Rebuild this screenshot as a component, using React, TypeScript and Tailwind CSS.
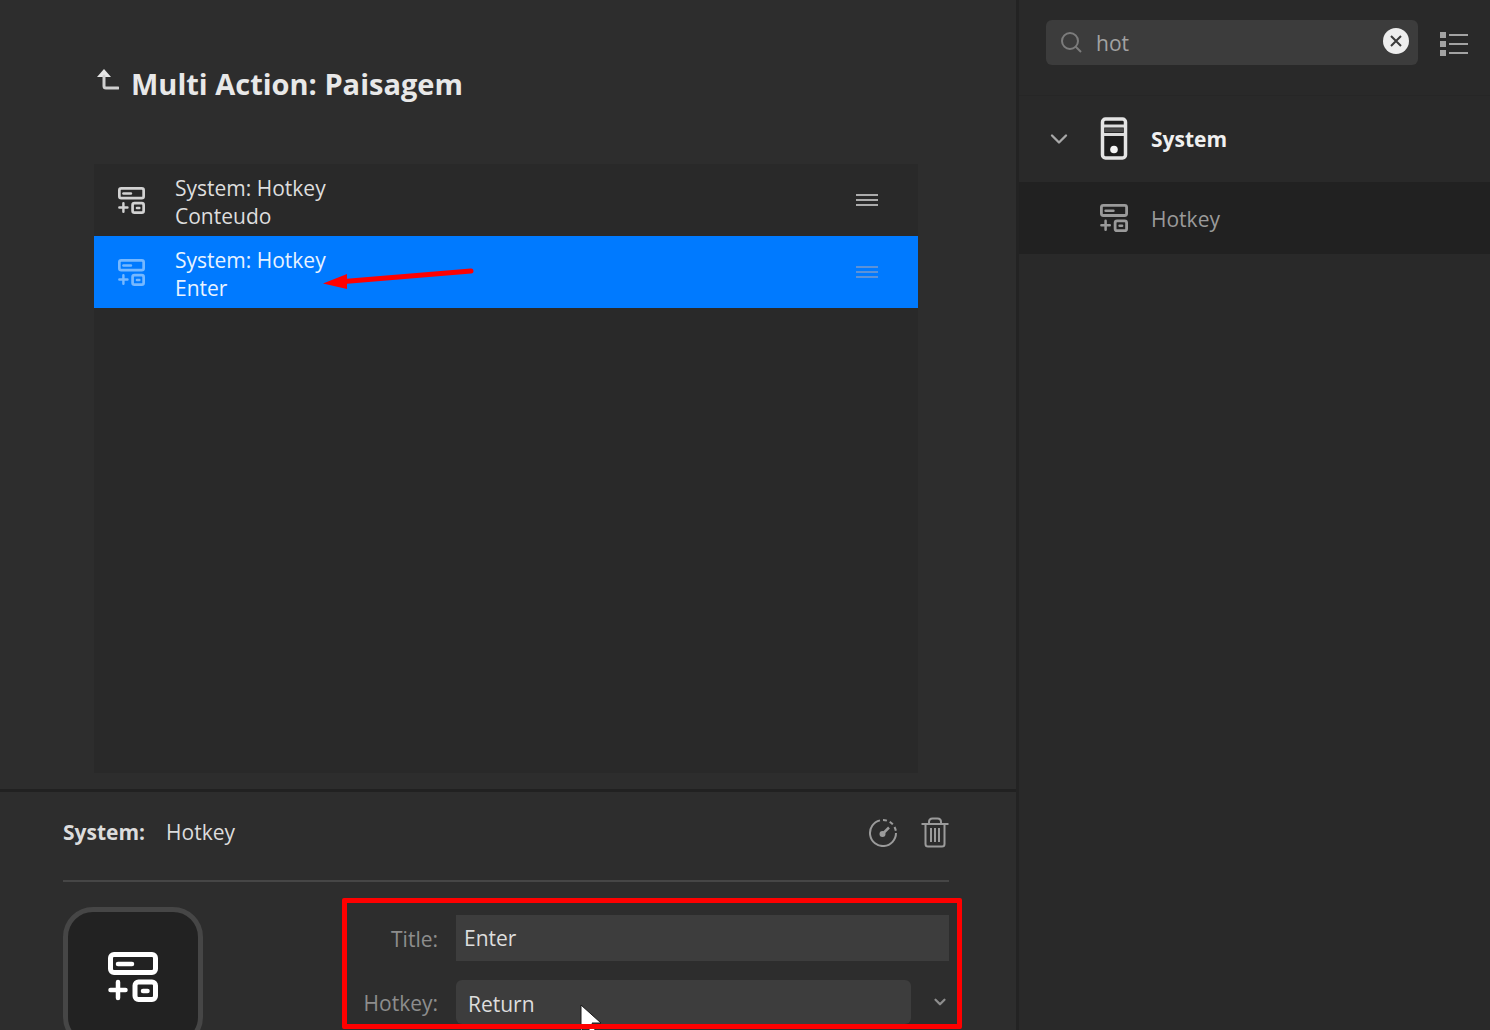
import React from 'react';
import { ChevronDown } from 'lucide-react';

interface ActionItem {
  id: number;
  name: string;
  title: string;
  selected: boolean;
}

const actions: ActionItem[] = [
  { id: 1, name: 'System: Hotkey', title: 'Conteudo', selected: false },
  { id: 2, name: 'System: Hotkey', title: 'Enter', selected: true },
];

const HotkeyIcon = ({ className }: { className?: string }) => (
  <svg viewBox="0 0 50 50" fill="none" stroke="currentColor" strokeWidth={5} className={className}>
    <rect x="2.5" y="2.5" width="45" height="18" rx="3.5" />
    <path d="M10 12h14" strokeWidth={4.5} strokeLinecap="round" />
    <path d="M10 30v16M2.5 38h15" strokeWidth={4.5} strokeLinecap="round" />
    <rect x="27" y="30" width="20.5" height="17.5" rx="3.5" />
    <path d="M35 39h4.5" strokeWidth={4.5} strokeLinecap="round" />
  </svg>
);

const BackIcon = () => (
  <svg viewBox="0 0 22 22" className="h-[22px] w-[22px]">
    <path d="M7 0L14 8H0Z" fill="#e6e6e6" />
    <path d="M7 7v10q0 2 2 2h12" fill="none" stroke="#d0d0d0" strokeWidth={3} strokeLinecap="round" />
  </svg>
);

const HandleIcon = ({ className }: { className?: string }) => (
  <svg viewBox="0 0 22 14" stroke="currentColor" strokeWidth={2} className={className}>
    <path d="M0 2h22M0 7h22M0 12h22" />
  </svg>
);

const SearchIcon = () => (
  <svg viewBox="0 0 22 22" fill="none" stroke="#7c7c7c" strokeWidth={2} className="h-[22px] w-[22px]">
    <circle cx="10" cy="9" r="8" />
    <path d="M15.5 14.5l5.5 5.5" />
  </svg>
);

const TowerIcon = () => (
  <svg viewBox="0 0 28 44" className="h-11 w-7">
    <rect x="2.5" y="2" width="23" height="39" rx="3" fill="#1d1d1d" stroke="#e4e4e4" strokeWidth={3.5} />
    <path d="M4 9h20M4 17.5h20" stroke="#dcdcdc" strokeWidth={3} />
    <path d="M4 13.2h20" stroke="#4a4a4a" strokeWidth={4} />
    <circle cx="14" cy="32.5" r="3.8" fill="#f4f4f4" />
  </svg>
);

const TimerIcon = () => (
  <svg viewBox="0 0 28 28" fill="none" stroke="#9b9b9b" strokeWidth={2} className="h-7 w-7">
    <path d="M11 1.4A13 13 0 1 0 27 14" />
    <path d="M14 1a13 13 0 0 1 13 13" strokeDasharray="4 3" />
    <path d="M14 14.5l6-6" strokeWidth={2.5} />
    <circle cx="13.5" cy="15" r="3" fill="#9b9b9b" stroke="none" />
  </svg>
);

const TrashIcon = () => (
  <svg viewBox="0 0 28 32" fill="none" stroke="#9b9b9b" strokeWidth={2} className="h-8 w-7">
    <path d="M0.5 7h27" />
    <path d="M8 7V5q0-3.5 3.5-3.5h5q3.5 0 3.5 3.5v2" />
    <path d="M4.5 7v20q0 2.5 2.5 2.5h14q2.5 0 2.5-2.5V7" />
    <path d="M10 11v14M14 11v14M18 11v14" />
  </svg>
);

const ListIcon = () => (
  <svg viewBox="0 0 30 26" className="h-[26px] w-[30px]">
    <path d="M1 1h6v6H1zM1 10h6v6H1zM1 19h6v6H1z" fill="#a3a3a3" />
    <path d="M10 4h19M10 13h19M10 22h19" stroke="#a3a3a3" strokeWidth={2} />
  </svg>
);

const ActionRow: React.FC<{ item: ActionItem }> = ({ item }) => (
  <li
    className={`flex h-[72px] items-center pr-10 pl-6 ${
      item.selected ? 'bg-[#007aff] text-[#e8f3ff]' : 'text-[#dedede]'
    }`}
  >
    <HotkeyIcon className={`h-[27px] w-[27px] ${item.selected ? 'text-[#76b8ff]' : 'text-[#d2d2d2]'}`} />
    <div className="ml-[30px] flex-1 pt-1 text-[21px] leading-7">
      <p>{item.name}</p>
      <p>{item.title}</p>
    </div>
    <button type="button" aria-label="Reorder">
      <HandleIcon className={`h-[14px] w-[22px] ${item.selected ? 'text-[#5c92d8]' : 'text-[#ababab]'}`} />
    </button>
  </li>
);

const ActionEditor = () => (
  <section className="relative h-[241px] shrink-0 overflow-hidden border-t-3 border-[#212121] pr-[67px] pl-[63px]">
    <div className="flex h-[90px] items-center border-b-2 border-[#464646] pb-[6px] text-[21px] text-[#dcdcdc]">
      <h2 className="font-bold">System:</h2>
      <span className="ml-[21px] flex-1">Hotkey</span>
      <button type="button" aria-label="Delay">
        <TimerIcon />
      </button>
      <button type="button" aria-label="Delete" className="ml-6">
        <TrashIcon />
      </button>
    </div>

    <div className="flex items-start pt-[25px]">
      <div className="flex h-[140px] w-[140px] shrink-0 items-center justify-center rounded-[30px] border-5 border-[#464646] bg-[#222222]">
        <HotkeyIcon className="h-[50px] w-[50px] text-white" />
      </div>

      <form className="relative ml-[139px] flex-1 pt-2 text-[21px]">
        <div className="flex h-[46px] items-center">
          <label htmlFor="title" className="w-24 pt-1 text-right text-[#8d8d8d]">Title:</label>
          <input
            id="title"
            defaultValue="Enter"
            className="ml-[18px] h-full min-w-0 flex-1 bg-[#3d3d3d] px-2 text-[#dedede] outline-none"
          />
        </div>
        <div className="mt-[19px] flex h-[44px] items-center">
          <label htmlFor="hotkey" className="w-24 pt-1 text-right text-[#8d8d8d]">Hotkey:</label>
          <input
            id="hotkey"
            defaultValue="Return"
            className="ml-[18px] h-full min-w-0 flex-1 rounded-md bg-[#3d3d3d] px-3 pt-1 text-[#dedede] outline-none"
          />
          <button type="button" aria-label="Choose key" className="ml-5 flex w-[18px] justify-center">
            <ChevronDown size={18} strokeWidth={3} color="#8d8d8d" />
          </button>
        </div>

        {/* Mouse pointer */}
        <svg viewBox="0 0 22 32" className="absolute top-[97px] left-[238px] h-8 w-[22px]">
          <path d="M1 1v26l6-6 4 9 5-2-4-9h9z" fill="#ffffff" stroke="#1a1a1a" strokeWidth={1} />
        </svg>

        {/* Highlight frame */}
        <div className="pointer-events-none absolute -top-[9px] -right-[13px] -bottom-[5px] left-0 rounded-xs border-5 border-[#ff0000]" />
      </form>
    </div>
  </section>
);

const ActionsSidebar = () => (
  <aside className="w-[474px] shrink-0 border-l-3 border-[#232323] bg-[#292929]">
    <div className="flex h-24 items-start border-b border-[#262626] pt-5 pr-[21px] pl-[27px]">
      <div className="flex h-[45px] flex-1 items-center rounded-md bg-[#3c3c3c] pr-[9px] pl-[14px]">
        <SearchIcon />
        <input
          type="text"
          aria-label="Search actions"
          defaultValue="hot"
          className="ml-[14px] min-w-0 flex-1 bg-transparent pt-[2px] text-[21px] text-[#a2a2a2] outline-none"
        />
        <button type="button" aria-label="Clear search" className="pb-1">
          <svg viewBox="0 0 26 26" className="h-[26px] w-[26px]">
            <circle cx="13" cy="13" r="13" fill="#ededed" />
            <path d="M8 8l10 10M18 8L8 18" stroke="#3a3a3a" strokeWidth={2} />
          </svg>
        </button>
      </div>
      <button type="button" aria-label="List view" className="mt-[11px] ml-[21px] shrink-0">
        <ListIcon />
      </button>
    </div>

    <button type="button" className="flex h-[86px] w-full items-center pl-[26px]">
      <ChevronDown size={28} strokeWidth={2} color="#a8a8a8" />
      <span className="ml-[27px]">
        <TowerIcon />
      </span>
      <span className="ml-[23px] pt-[2px] text-[21px] font-bold text-[#f0f0f0]">System</span>
    </button>
    <div className="flex h-[72px] items-center bg-[#212121] pl-[81px] text-[#9a9a9a]">
      <HotkeyIcon className="h-7 w-7" />
      <span className="ml-[23px] pt-1 text-[21px]">Hotkey</span>
    </div>
  </aside>
);

export default function App() {
  return (
    <div className="flex h-screen overflow-hidden bg-[#2d2d2d] font-['Open_Sans','Noto_Sans',sans-serif]">
      <main className="flex min-w-0 flex-1 flex-col">
        <section className="flex min-h-0 flex-1 flex-col pt-16 pr-[98px] pb-4 pl-[94px]">
          <header className="flex h-10 items-center gap-3 pl-[3px]">
            <button type="button" aria-label="Back" className="mb-2">
              <BackIcon />
            </button>
            <h1 className="text-[29px] leading-10 font-bold text-[#e8e8e8]">Multi Action: Paisagem</h1>
          </header>

          <div className="relative mt-[60px] flex-1 bg-[#292929]">
            <ul>
              {actions.map(item => (
                <ActionRow key={item.id} item={item} />
              ))}
            </ul>
            {/* Pointer to the selected action */}
            <svg viewBox="0 0 152 24" className="absolute top-[102px] left-[228px] h-6 w-[152px]">
              <path d="M22 15.5L149 5" stroke="#ff0000" strokeWidth={5} strokeLinecap="round" />
              <path d="M1 17.5L25 8v15z" fill="#ff0000" />
            </svg>
          </div>
        </section>
        <ActionEditor />
      </main>
      <ActionsSidebar />
    </div>
  );
}
